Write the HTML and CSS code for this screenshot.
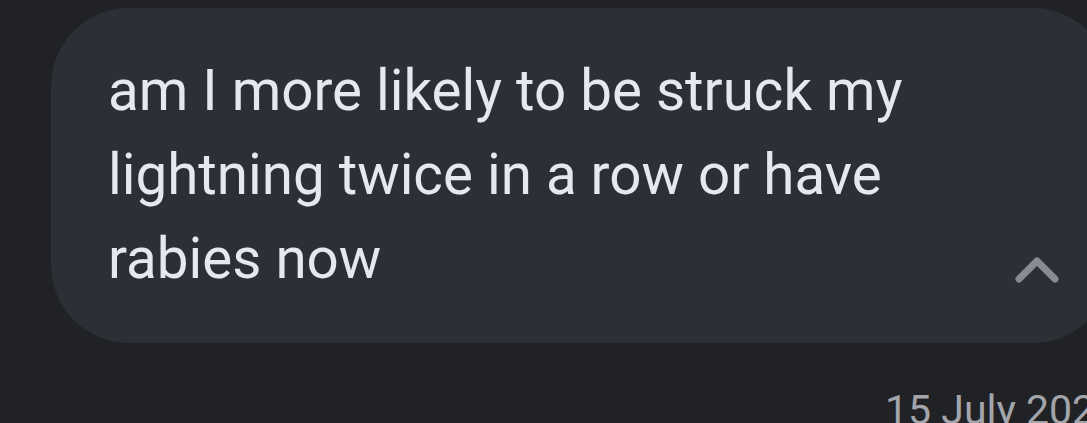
FILE: index.html
```html
<!DOCTYPE html>
<html lang="en">
<head>
<meta charset="utf-8">
<link rel="stylesheet" href="styles.css">
<title>Message</title>
</head>
<body>
  <div class="thread">
    <div class="bubble">
      <p class="message">am I more likely to be struck my lightning twice in a row or have rabies now</p>
      <button class="collapse" aria-label="Collapse">
        <svg width="48" height="32" viewBox="0 0 48 32">
          <path d="M6 24 L24 6 L42 24" fill="none" stroke="#8a8b91" stroke-width="7" stroke-linecap="round" stroke-linejoin="round"/>
        </svg>
      </button>
    </div>
    <div class="stamp">15 July 2024</div>
  </div>
</body>
</html>
```
FILE: styles.css
```css
html, body {
  margin: 0;
  padding: 0;
  background: #212226;
  overflow: hidden;
  width: 1087px;
  height: 423px;
}

.thread {
  display: flex;
  flex-direction: column;
  padding: 8px 0 0 51px;
}

.bubble {
  position: relative;
  width: 1060px;
  height: 335px;
  box-sizing: border-box;
  background: #2d2f36;
  border-radius: 78px;
  padding: 41px 100px 0 57px;
}

.message {
  margin: 0;
  font-family: Roboto, "Liberation Sans", sans-serif;
  font-size: 56.5px;
  line-height: 84px;
  color: #e6e7ef;
  max-width: 860px;
}

.collapse {
  position: absolute;
  left: 962px;
  top: 247px;
  border: 0;
  padding: 0;
  background: none;
  display: block;
}

.stamp {
  margin: 43px 0 0 834px;
  font-family: Roboto, "Liberation Sans", sans-serif;
  font-size: 41px;
  color: #a3a5ab;
  white-space: nowrap;
}
```
